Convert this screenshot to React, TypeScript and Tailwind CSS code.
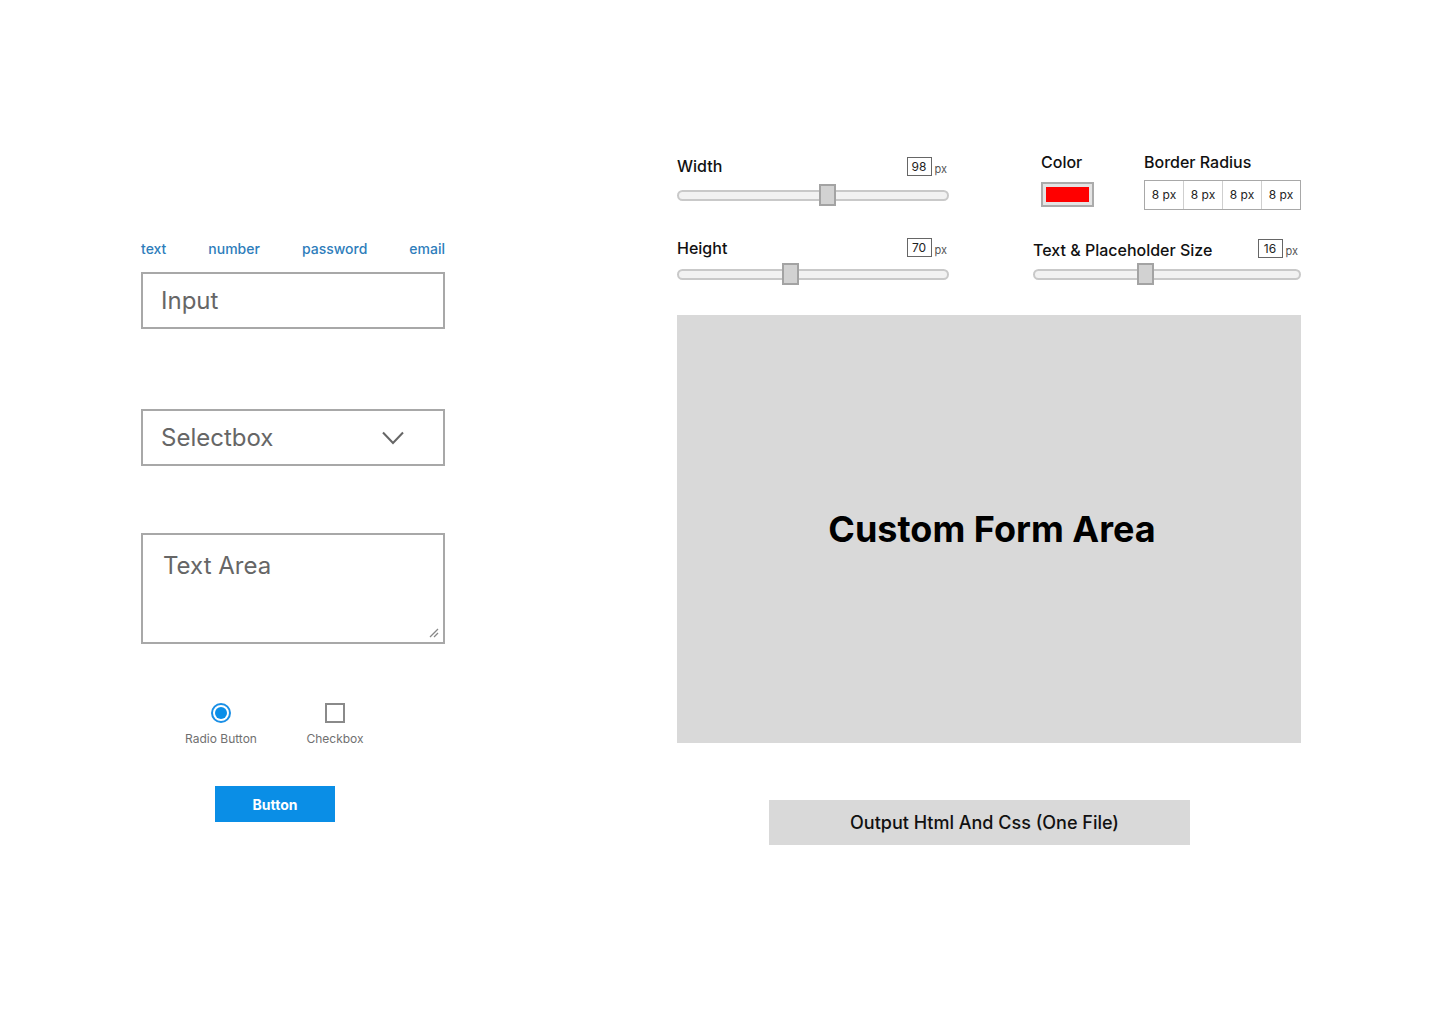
import React from 'react';

const font = { fontFamily: 'Inter, "Noto Sans", sans-serif' };

const NumBox: React.FC<{ value: string }> = ({ value }) => (
  <div className="flex items-end gap-[3px]">
    <div className="w-[25px] h-[19px] border border-[#666] flex items-center justify-center text-[12px] leading-none text-[#222]">
      {value}
    </div>
    <span className="text-[11px] leading-none text-[#555] pb-[1px]">px</span>
  </div>
);

const Slider: React.FC<{ thumb: string }> = ({ thumb }) => (
  <div className="relative h-[22px] flex items-center">
    <div className="w-full h-[11px] rounded-full border-2 border-[#c9c9c9] bg-[#f2f2f2]" />
    <div className={`absolute top-0 ${thumb} w-[17px] h-[22px] bg-[#d2d2d2] border-2 border-[#a3a3a3]`} />
  </div>
);

const App: React.FC = () => {
  return (
    <div className="w-[1440px] h-[1024px] bg-white flex pl-[141px]" style={font}>
      {/* left column */}
      <div className="w-[304px] pt-[240px] flex flex-col">
        <div className="flex justify-between text-[14px] leading-[17px] font-medium text-[#2e7dbb]">
          <span>text</span>
          <span>number</span>
          <span>password</span>
          <span>email</span>
        </div>
        <div className="mt-[15px] h-[57px] border-2 border-[#a8a8a8] flex items-center pl-[18px] text-[24px] text-[#666]">
          Input
        </div>
        <div className="mt-[80px] h-[57px] border-2 border-[#a8a8a8] flex items-center justify-between pl-[18px] pr-[39px] text-[24px] text-[#666]">
          <span>Selectbox</span>
          <svg width="22" height="14" viewBox="0 0 22 14" fill="none">
            <path d="M1 1.5 L11 12 L21 1.5" stroke="#666" strokeWidth="2" />
          </svg>
        </div>
        <div className="mt-[67px] h-[111px] border-2 border-[#a8a8a8] relative pl-[20px] pt-[16px] text-[24px] leading-[29px] text-[#666]">
          Text Area
          <svg className="absolute right-[3px] bottom-[3px]" width="12" height="12" viewBox="0 0 12 12" fill="none">
            <path d="M2 10 L10 2 M6 10 L10 6" stroke="#888" strokeWidth="1.3" />
          </svg>
        </div>
        <div className="mt-[59px] flex pl-[30px] gap-[14px]">
          <div className="w-[100px] flex flex-col items-center">
            <div className="w-[20px] h-[20px] rounded-full border-2 border-[#1a8fe6] flex items-center justify-center">
              <div className="w-[12px] h-[12px] rounded-full bg-[#0a8ee8]" />
            </div>
            <span className="mt-[8px] text-[12px] leading-[15px] text-[#707070]">Radio Button</span>
          </div>
          <div className="w-[100px] flex flex-col items-center">
            <div className="w-[20px] h-[20px] border-2 border-[#8a8a8a]" />
            <span className="mt-[8px] text-[12px] leading-[15px] text-[#707070]">Checkbox</span>
          </div>
        </div>
        <button className="mt-[40px] ml-[74px] w-[120px] h-[36px] bg-[#0a8ee6] text-white text-[14px] font-bold">
          Button
        </button>
      </div>

      {/* right column */}
      <div className="ml-[232px] w-[624px] pt-[153px] flex flex-col">
        <div className="flex">
          <div className="w-[272px] pt-[4px]">
            <div className="flex justify-between items-end pr-[2px]">
              <span className="text-[16px] leading-[19px] font-medium text-[#111]">Width</span>
              <NumBox value="98" />
            </div>
            <div className="mt-[8px]">
              <Slider thumb="left-[142px]" />
            </div>
          </div>
          <div className="ml-[92px] flex flex-col">
            <span className="text-[16px] leading-[19px] font-medium text-[#111]">Color</span>
            <div className="mt-[10px] w-[53px] h-[25px] border-2 border-[#ababab] bg-[#e4e4e4] flex items-center justify-center">
              <div className="w-[43px] h-[15px] bg-[#ff0000]" />
            </div>
          </div>
          <div className="ml-[50px] flex flex-col">
            <span className="text-[16px] leading-[19px] font-medium text-[#111]">Border Radius</span>
            <div className="mt-[8px] w-[157px] h-[30px] border border-[#a8a8a8] flex text-[12px] text-[#222]">
              <div className="flex-1 flex items-center justify-center border-r border-[#cfcfcf]">8 px</div>
              <div className="flex-1 flex items-center justify-center border-r border-[#cfcfcf]">8 px</div>
              <div className="flex-1 flex items-center justify-center border-r border-[#cfcfcf]">8 px</div>
              <div className="flex-1 flex items-center justify-center">8 px</div>
            </div>
          </div>
        </div>

        <div className="flex mt-[28px]">
          <div className="w-[272px]">
            <div className="flex justify-between items-end pr-[2px]">
              <span className="text-[16px] leading-[19px] font-medium text-[#111] translate-y-[1px]">Height</span>
              <NumBox value="70" />
            </div>
            <div className="mt-[6px]">
              <Slider thumb="left-[105px]" />
            </div>
          </div>
          <div className="ml-[84px] w-[268px] pt-[1px]">
            <div className="flex justify-between items-end pr-[3px]">
              <span className="text-[16px] leading-[19px] font-medium text-[#111] translate-y-[2px]">Text &amp; Placeholder Size</span>
              <NumBox value="16" />
            </div>
            <div className="mt-[5px]">
              <Slider thumb="left-[104px]" />
            </div>
          </div>
        </div>

        <div className="mt-[30px] h-[428px] bg-[#d9d9d9] flex items-center justify-center">
          <span className="text-[36px] font-bold text-black pl-[6px]">Custom Form Area</span>
        </div>

        <button className="mt-[57px] ml-[92px] w-[421px] h-[45px] bg-[#d9d9d9] pl-[10px] text-[18px] font-medium text-[#111]">
          Output Html And Css (One File)
        </button>
      </div>
    </div>
  );
};

export default App;
